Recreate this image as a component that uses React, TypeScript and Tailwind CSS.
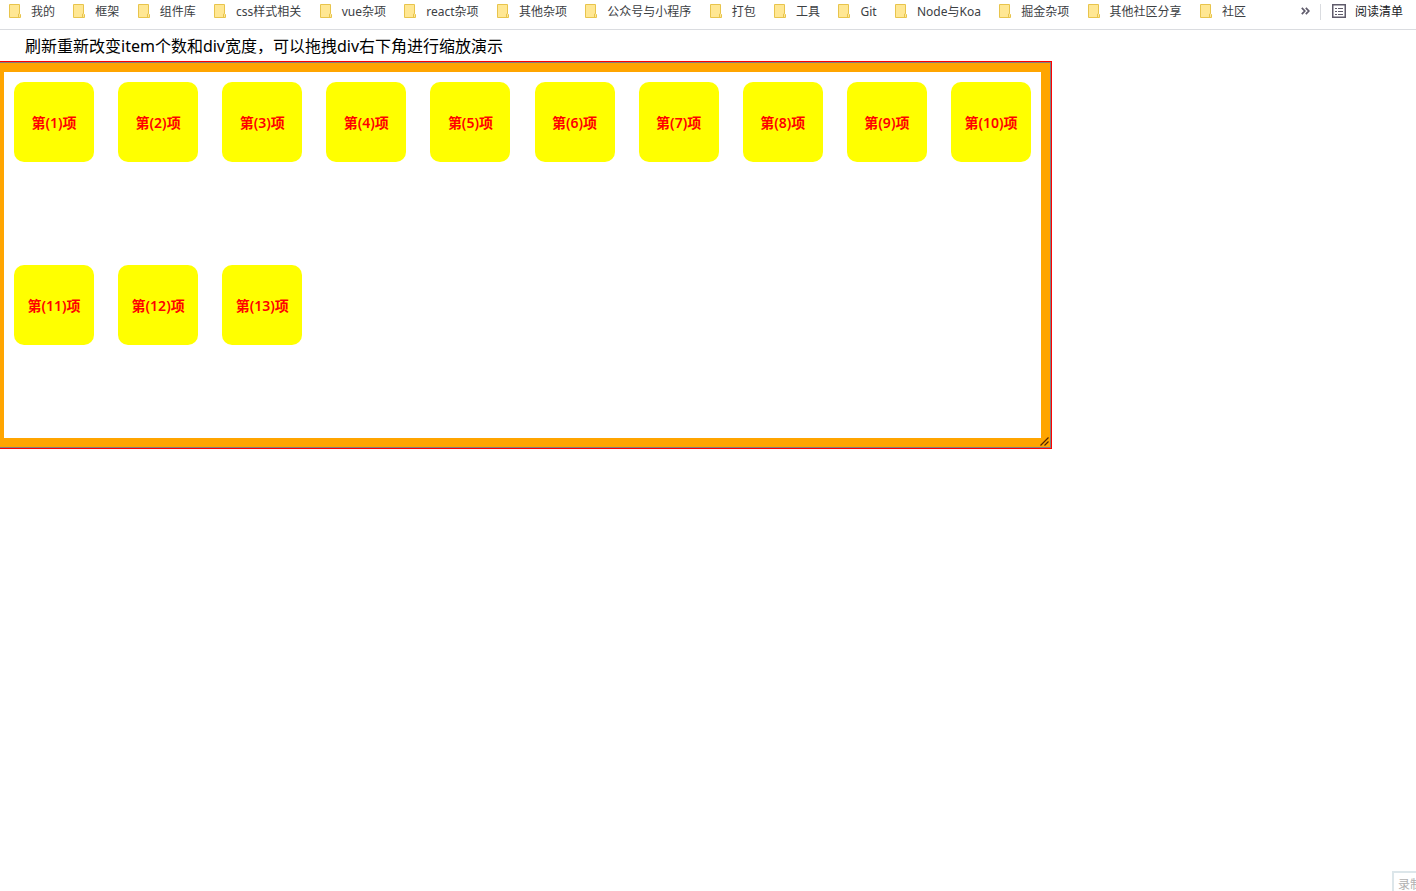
const bookmarks: string[] = [
  "我的", "框架", "组件库", "css样式相关", "vue杂项", "react杂项", "其他杂项", "公众号与小程序",
  "打包", "工具", "Git", "Node与Koa", "掘金杂项", "其他社区分享", "社区",
];

const items = Array.from({ length: 13 }, (_, i) => i + 1);

function FolderIcon() {
  return (
    <svg className="shrink-0" width="12" height="14" viewBox="0 0 12 14" aria-hidden="true">
      <path d="M.5.5h10v9l1 1v3H.5z" fill="#ffe793" stroke="#e8c44c" />
      <path d="M9.500 13v-3l1-.5" fill="none" stroke="#e8c44c" />
    </svg>
  );
}

function ReadingListIcon() {
  return (
    <svg className="shrink-0" width="14" height="14" viewBox="0 0 14 14" aria-hidden="true">
      <rect x=".75" y=".75" width="12.500" height="12.500" fill="none" stroke="#5f5b6b" strokeWidth="1.500" />
      <path d="M3 4.500h2M3 7.500h2M3 10.500h2M6 4.500h5M6 7.500h5M6 10.500h5" stroke="#5f5b6b" />
    </svg>
  );
}

function BookmarkBar() {
  return (
    <nav className="flex h-[30px] items-start gap-[55px] border-b border-[#dadce0] pt-1 pr-[13px] pl-[9px] text-xs text-[#3c4043]">
      <ul className="flex min-w-0 grow justify-between overflow-hidden">
        {bookmarks.map((name) => (
          <li key={name} className="shrink-0">
            <a href="#" className="flex items-start gap-2.5 leading-4 whitespace-nowrap">
              <FolderIcon />
              {name}
            </a>
          </li>
        ))}
      </ul>
      <div className="flex h-4 shrink-0 items-start leading-4">
        <button type="button" aria-label="更多书签" className="mr-2.5 pt-[3px]">
          <svg width="9" height="8" viewBox="0 0 9 8" fill="none" stroke="#5f5b6b" strokeWidth="1.700" aria-hidden="true">
            <path d="M.8.800 3.800 4 .8 7.200M4.800.800 7.800 4l-3 3.200" />
          </svg>
        </button>
        <span className="mr-[11px] h-4 w-px bg-[#dadce0]" />
        <button type="button" className="flex items-start gap-[9px] whitespace-nowrap text-[#202124]">
          <ReadingListIcon />
          阅读清单
        </button>
      </div>
    </nav>
  );
}

function ResizablePanel() {
  return (
    <section className="relative w-[1052px] max-w-full border border-l-0 border-[#f00]">
      <div className="border border-l-0 border-[#808080]">
        <ul className="grid auto-rows-[183px] grid-cols-[repeat(auto-fill,80px)] justify-between gap-x-6 border-[9px] border-l-4 border-[orange] px-2.5">
          {items.map((n) => (
            <li
              key={n}
              className="mt-2.5 flex size-20 items-center justify-center rounded-[10px] bg-[#ff0] pt-0.5 text-sm font-semibold text-[#f00]"
            >
              第({n})项
            </li>
          ))}
        </ul>
      </div>
      <svg className="absolute right-0.5 bottom-0.5 cursor-nwse-resize" width="9" height="9" viewBox="0 0 9 9" aria-hidden="true">
        <path d="M.5 8.500l8-8M4.500 8.500l4-4" stroke="#552500" strokeWidth="1.200" />
      </svg>
    </section>
  );
}

export default function App() {
  return (
    <div className="relative min-h-screen overflow-hidden bg-white font-['Noto_Sans','Noto_Sans_CJK_SC',sans-serif]">
      <BookmarkBar />
      <main>
        <p className="pt-1 pb-[3px] pl-[25px] text-base text-black">
          刷新重新改变item个数和div宽度，可以拖拽div右下角进行缩放演示
        </p>
        <ResizablePanel />
      </main>
      <div className="absolute right-0 bottom-0 h-5 w-6 overflow-hidden border-t-2 border-l-2 border-[#dce6ea] pt-1 pl-1 text-xs whitespace-nowrap text-[#b0b0b0]">
        录制
      </div>
    </div>
  );
}
